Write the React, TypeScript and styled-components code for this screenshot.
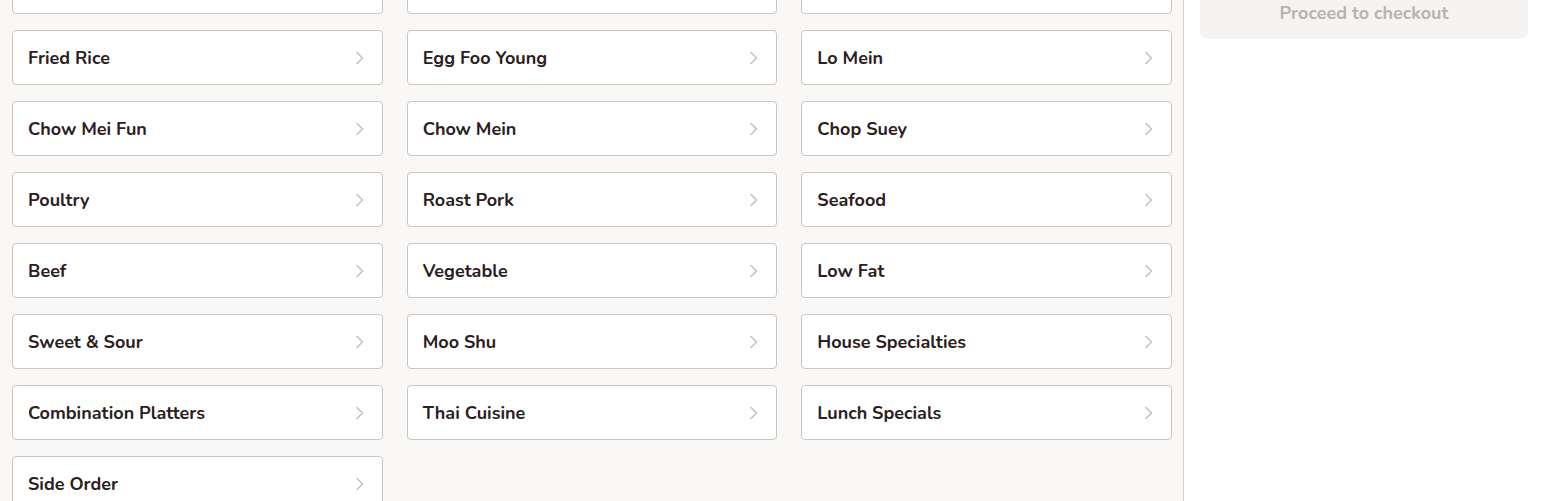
import styled, { createGlobalStyle } from "styled-components";

const GlobalStyle = createGlobalStyle`
  html, body {
    margin: 0;
    padding: 0;
    background: #ffffff;
    font-family: "Nunito", Lato, "Open Sans", sans-serif;
    overflow: hidden;
  }
`;

const Page = styled.div`
  display: grid;
  grid-template-columns: 1184px 1fr;
  height: 501px;
  overflow: hidden;
`;

const MenuPanel = styled.main`
  background: #f9f8f6;
  border-right: 1px solid #d6d3cf;
  padding: 0 11px 0 12px;
  overflow: hidden;
`;

const CategoryGrid = styled.div`
  display: grid;
  grid-template-columns: repeat(3, 1fr);
  column-gap: 24px;
  row-gap: 16px;
  margin-top: -41px;
`;

const CategoryCard = styled.button`
  display: flex;
  align-items: center;
  justify-content: space-between;
  height: 55px;
  box-sizing: border-box;
  padding: 0 17px 0 15px;
  background: #ffffff;
  border: 1px solid #c9c6c2;
  border-radius: 4px;
  font-family: inherit;
  font-size: 18px;
  font-weight: 700;
  color: #2b201d;
  text-align: left;
  cursor: pointer;
`;

const Chevron = styled.svg`
  width: 10px;
  height: 14px;
  flex-shrink: 0;
`;

const CartPanel = styled.aside`
  background: #ffffff;
  padding: 0 16px;
`;

const CheckoutButton = styled.button`
  display: flex;
  align-items: center;
  justify-content: center;
  width: 100%;
  height: 52px;
  margin-top: -13px;
  border: none;
  border-radius: 8px;
  background: #f5f4f2;
  color: #b8b3ad;
  font-family: inherit;
  font-size: 18px;
  font-weight: 700;
`;

const categories = [
  "Soups",
  "Appetizers",
  "Salads",
  "Fried Rice",
  "Egg Foo Young",
  "Lo Mein",
  "Chow Mei Fun",
  "Chow Mein",
  "Chop Suey",
  "Poultry",
  "Roast Pork",
  "Seafood",
  "Beef",
  "Vegetable",
  "Low Fat",
  "Sweet & Sour",
  "Moo Shu",
  "House Specialties",
  "Combination Platters",
  "Thai Cuisine",
  "Lunch Specials",
  "Side Order",
];

export default function App() {
  return (
    <>
      <GlobalStyle />
      <Page>
        <MenuPanel>
          <CategoryGrid>
            {categories.map((name) => (
              <CategoryCard key={name}>
                <span>{name}</span>
                <Chevron viewBox="0 0 10 14" fill="none">
                  <path
                    d="M2 1.5 L7.5 7 L2 12.5"
                    stroke="#c4c2bf"
                    strokeWidth="1.6"
                    strokeLinecap="round"
                    strokeLinejoin="round"
                  />
                </Chevron>
              </CategoryCard>
            ))}
          </CategoryGrid>
        </MenuPanel>
        <CartPanel>
          <CheckoutButton disabled>Proceed to checkout</CheckoutButton>
        </CartPanel>
      </Page>
    </>
  );
}
